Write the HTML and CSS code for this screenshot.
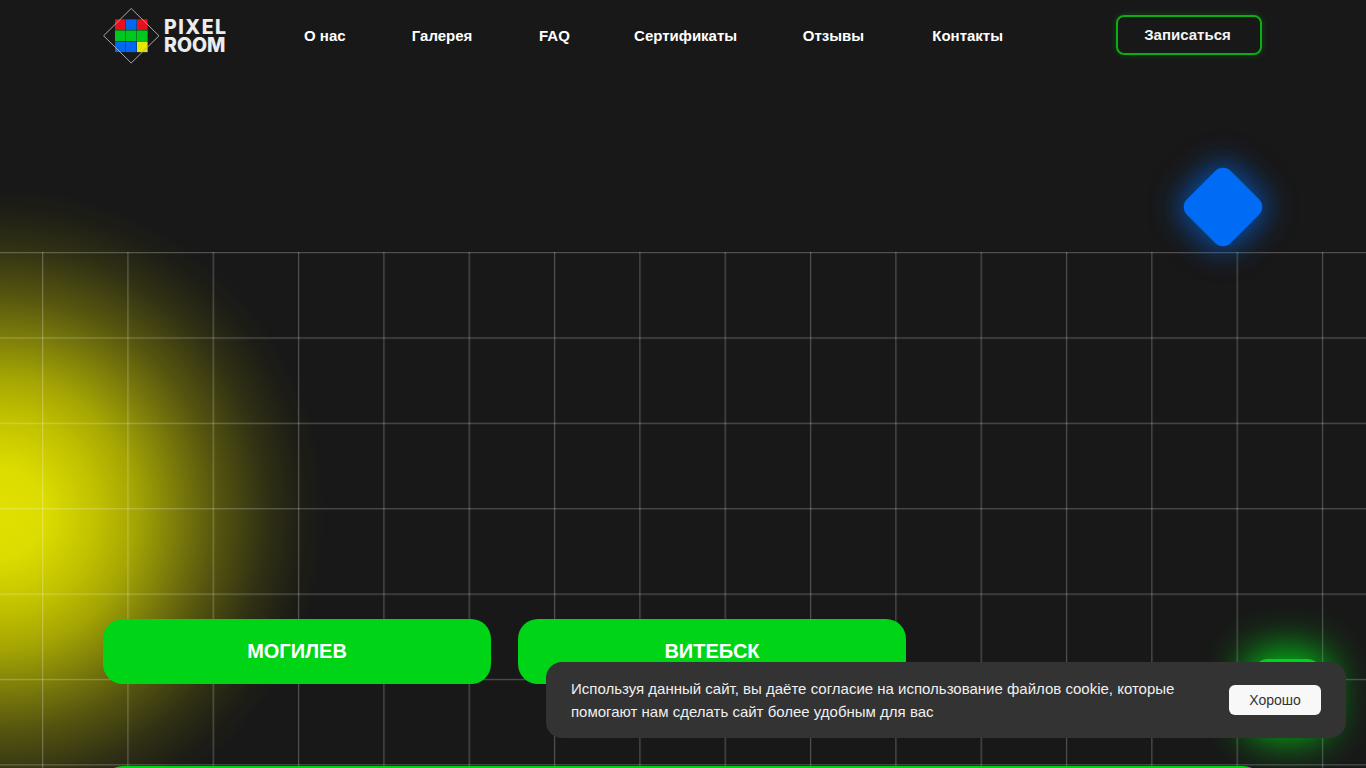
FILE: index.html
```html
<!DOCTYPE html>
<html lang="ru">
<head>
<meta charset="utf-8">
<title>Pixel Room</title>
<link rel="stylesheet" href="styles.css">
</head>
<body>
<div class="page">
  <div class="blob"></div>
  <div class="grid"></div>
  <div class="diamond"></div>
  <div class="glow-button"></div>

  <div class="container">
    <header class="header">
      <a class="logo" href="#">
        <svg class="logo-mark" width="58" height="58" viewBox="0 0 58 58">
          <rect x="12" y="12.3" width="10.6" height="10.6" fill="#e8101c"/>
          <rect x="23" y="12.3" width="10.6" height="10.6" fill="#0068f0"/>
          <rect x="34" y="12.3" width="10.6" height="10.6" fill="#e8101c"/>
          <rect x="12" y="23.4" width="10.6" height="10.6" fill="#00c81e"/>
          <rect x="23" y="23.4" width="10.6" height="10.6" fill="#00c81e"/>
          <rect x="34" y="23.4" width="10.6" height="10.6" fill="#00c81e"/>
          <rect x="12" y="34.5" width="10.6" height="10.6" fill="#0068f0"/>
          <rect x="23" y="34.5" width="10.6" height="10.6" fill="#0068f0"/>
          <rect x="34" y="34.5" width="10.6" height="10.6" fill="#e6e600"/>
          <path d="M28.2 1.5 L56 28.8 L28.2 56 L0.6 28.8 Z" fill="none" stroke="#a9a9a9" stroke-width="1"/>
        </svg>
        <span class="logo-text">
          <span class="logo-top">PIXEL</span>
          <span class="logo-bottom">ROOM</span>
        </span>
      </a>
      <nav class="nav">
        <a href="#">О нас</a>
        <a href="#">Галерея</a>
        <a href="#">FAQ</a>
        <a href="#">Сертификаты</a>
        <a href="#">Отзывы</a>
        <a href="#">Контакты</a>
      </nav>
      <a class="signup" href="#">Записаться</a>
    </header>

    <main class="hero">
      <div class="cities">
        <a class="city" href="#">МОГИЛЕВ</a>
        <a class="city" href="#">ВИТЕБСК</a>
      </div>
      <div class="wide-bar"></div>
    </main>
  </div>

  <aside class="cookie">
    <p class="cookie-text">Используя данный сайт, вы даёте согласие на использование файлов cookie, которые помогают нам сделать сайт более удобным для вас</p>
    <button class="cookie-ok" type="button">Хорошо</button>
  </aside>
</div>
</body>
</html>
```

FILE: styles.css
```css
* { box-sizing: border-box; }
html, body { margin: 0; padding: 0; }
body {
  background: #181818;
  color: #fff;
  font-family: "Liberation Sans", Arial, sans-serif;
}
a { color: inherit; text-decoration: none; }

.page {
  position: relative;
  width: 100%;
  height: 768px;
  overflow: hidden;
  background: #181818;
}

/* decorative layers */
.blob {
  position: absolute;
  left: -325px;
  top: 188px;
  width: 650px;
  height: 650px;
  border-radius: 50%;
  background: radial-gradient(circle closest-side,
    #e0e000 0%, #dcdc00 14%, #c0c000 30%, #a4a404 42%, #74740c 57%, #55550f 67%, #303014 82%, #1e1e16 93%, rgba(24,24,24,0) 100%);
}
.grid {
  position: absolute;
  left: 0;
  right: 0;
  top: 252px;
  bottom: 0;
  background-image:
    linear-gradient(to right, rgba(255,255,255,.24) 1px, rgba(255,255,255,.06) 1px, rgba(255,255,255,.06) 2px, transparent 2px),
    linear-gradient(to bottom, rgba(255,255,255,.24) 1px, rgba(255,255,255,.06) 1px, rgba(255,255,255,.06) 2px, transparent 2px);
  background-size: 85.33px 100%, 100% 85.375px;
  background-position: 42px 0, 0 0;
}
.diamond {
  position: absolute;
  left: 1192px;
  top: 176px;
  width: 62px;
  height: 62px;
  border-radius: 11px;
  background: #006bf5;
  box-shadow: 0 0 30px 4px rgba(0,107,245,.7);
  transform: rotate(45deg);
}
.glow-button {
  position: absolute;
  left: 1254px;
  top: 659px;
  width: 67px;
  height: 70px;
  border-radius: 14px;
  background: #00d416;
  box-shadow: 0 0 40px 10px rgba(0,212,22,.9);
}

/* layout */
.container {
  position: relative;
  width: 1160px;
  margin-left: 103px;
}
.header {
  display: flex;
  align-items: center;
  height: 70px;
}
.logo {
  display: flex;
  align-items: center;
  gap: 3px;
  width: 123px;
  flex: none;
  margin-top: 2px;
}
.logo-mark { flex: none; }
.logo-text {
  display: flex;
  flex-direction: column;
  font-family: Inter, "Liberation Sans", sans-serif;
  font-weight: 800;
  font-size: 19.5px;
  line-height: 18px;
  color: #ececec;
}
.logo-top { letter-spacing: 1.5px; }
.logo-bottom { letter-spacing: 0; }

.nav {
  display: flex;
  justify-content: space-between;
  width: 699px;
  margin-left: 78px;
  margin-top: 2px;
  font-size: 15px;
  font-weight: 700;
  line-height: 20px;
}
.nav a:nth-child(3) { margin-left: 0.5px; margin-right: -0.5px; }
.nav a:nth-child(4) { margin-left: -1.5px; margin-right: 1.5px; }
.nav a:nth-child(5) { margin-left: -2px; margin-right: 2px; }
.signup {
  display: flex;
  align-items: center;
  justify-content: center;
  width: 146px;
  height: 40px;
  margin-left: auto;
  margin-right: 1px;
  margin-top: -1px;
  padding-right: 3px;
  border: 2px solid #0aae12;
  border-radius: 8px;
  font-size: 15px;
  font-weight: 700;
  color: #f4f4f4;
  box-shadow: 0 0 6px rgba(10,174,18,.3);
}

.hero {
  display: flex;
  flex-direction: column;
  padding-top: 549px;
}
.cities {
  display: flex;
  gap: 27px;
}
.city {
  display: flex;
  align-items: center;
  justify-content: center;
  width: 388px;
  height: 65px;
  border-radius: 20px;
  background: #00d416;
  font-size: 20px;
  font-weight: 700;
}
.wide-bar {
  height: 65px;
  margin-top: 82px;
  border-radius: 20px;
  background: #00d416;
}

.cookie {
  position: absolute;
  right: 20px;
  top: 662px;
  width: 800px;
  height: 76px;
  display: flex;
  align-items: center;
  justify-content: space-between;
  padding: 0 25px;
  background: #333;
  border-radius: 16px;
}
.cookie-text {
  margin: 0;
  width: 640px;
  font-size: 15px;
  line-height: 23px;
  color: #f0f0f0;
}
.cookie-ok {
  width: 92px;
  height: 30px;
  padding: 0;
  border: 0;
  border-radius: 6px;
  background: #f8f8f8;
  color: #333;
  font-family: inherit;
  font-size: 14px;
}
```
